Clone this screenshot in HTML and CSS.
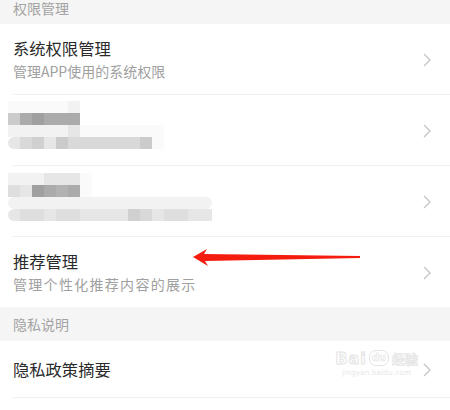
FILE: index.html
```html
<!DOCTYPE html>
<html lang="zh">
<head>
<meta charset="utf-8">
<link rel="stylesheet" href="styles.css">
</head>
<body>
<div class="page">
  <div class="section top">权限管理</div>
  <div class="row">
    <div class="text">
      <div class="title">系统权限管理</div>
      <div class="sub">管理APP使用的系统权限</div>
    </div>
    <svg class="chev" viewBox="0 0 8 14" width="8" height="14"><polyline points="1,1 7,7 1,13"/></svg>
  </div>
  <div class="row">
    <div class="mosaic m-a">
      <span class="c0"></span><span class="c0"></span><span class="c0"></span><span class="c0"></span><span class="c0"></span><span class="c1"></span><span></span><span></span><span></span><span></span><span></span><span></span><span></span>
      <span class="c4"></span><span class="c5"></span><span class="c6"></span><span class="c5"></span><span class="c5"></span><span class="c5"></span><span></span><span></span><span></span><span></span><span></span><span></span><span></span>
      <span class="c1"></span><span class="c1"></span><span class="c1"></span><span class="c1"></span><span class="c1"></span><span class="c2"></span><span class="c0"></span><span class="c0"></span><span class="c0"></span><span class="c0"></span><span class="c0"></span><span class="c0"></span><span class="c0"></span>
      <span class="c2 rl"></span><span class="c3"></span><span class="c3b"></span><span class="c2"></span><span class="c4"></span><span class="c3"></span><span class="c3"></span><span class="c3"></span><span class="c3"></span><span class="c3"></span><span class="c3"></span><span class="c4"></span><span class="c0"></span>
    </div>
    <svg class="chev" viewBox="0 0 8 14" width="8" height="14"><polyline points="1,1 7,7 1,13"/></svg>
  </div>
  <div class="row">
    <div class="mosaic m-b">
      <span class="c1"></span><span class="c1"></span><span class="c1"></span><span class="c2"></span><span class="c2"></span><span class="c2"></span><span class="c0"></span><span></span><span></span><span></span><span></span><span></span><span></span><span></span><span></span><span></span><span></span>
      <span class="c2b"></span><span class="c2"></span><span class="c6"></span><span class="c5"></span><span class="c5b"></span><span class="c5"></span><span class="c0"></span><span></span><span></span><span></span><span></span><span></span><span></span><span></span><span></span><span></span><span></span>
      <span class="c1 rl"></span><span class="c1"></span><span class="c1"></span><span class="c1"></span><span class="c1"></span><span class="c1"></span><span class="c1"></span><span class="c1"></span><span class="c1"></span><span class="c1"></span><span class="c1"></span><span class="c1"></span><span class="c1"></span><span class="c1"></span><span class="c1"></span><span class="c1"></span><span class="c1 rr"></span>
      <span class="c2 rl"></span><span class="c2b"></span><span class="c2b"></span><span class="c2"></span><span class="c2b"></span><span class="c2b"></span><span class="c2"></span><span class="c2"></span><span class="c2"></span><span class="c2"></span><span class="c3b"></span><span class="c3"></span><span class="c2"></span><span class="c2b"></span><span class="c2b"></span><span class="c2"></span><span class="c2"></span>
    </div>
    <svg class="chev" viewBox="0 0 8 14" width="8" height="14"><polyline points="1,1 7,7 1,13"/></svg>
  </div>
  <div class="row last">
    <div class="text">
      <div class="title">推荐管理</div>
      <div class="sub wide">管理个性化推荐内容的展示</div>
    </div>
    <svg class="chev" viewBox="0 0 8 14" width="8" height="14"><polyline points="1,1 7,7 1,13"/></svg>
  </div>
  <div class="section">隐私说明</div>
  <div class="row single">
    <div class="text">
      <div class="title">隐私政策摘要</div>
    </div>
    <svg class="chev" viewBox="0 0 8 14" width="8" height="14"><polyline points="1,1 7,7 1,13"/></svg>
    <div class="watermark">
      <div class="wm-top"><span class="wm-bai">Bai</span><span class="wm-du">du</span><span class="wm-jy">经验</span></div>
      <div class="wm-url">jingyan.baidu.com</div>
    </div>
  </div>
</div>
<svg class="arrow" width="180" height="24" viewBox="190 246 180 24">
  <polygon points="193,257 207,249 204,254 360,256 360,258 205,261 208,266" />
</svg>
</body>
</html>
```
FILE: styles.css
```css
html, body {
  margin: 0;
  padding: 0;
  background: #ffffff;
  font-family: "Noto Sans CJK SC", "Noto Sans", sans-serif;
  overflow: hidden;
}
.page {
  position: relative;
}
.section {
  height: 34px;
  line-height: 34px;
  background: #f5f5f5;
  color: #a3a3a3;
  font-size: 14px;
  padding-left: 13px;
}
.section.top {
  height: 24px;
  line-height: 16px;
}
.row {
  height: 70px;
  margin-left: 13px;
  border-bottom: 1px solid #f1f1f1;
  display: flex;
  align-items: center;
  justify-content: space-between;
  padding-right: 19px;
  position: relative;
}
.row.last {
  border-bottom: none;
}
.row.single {
  height: 56px;
}
.text {
  display: flex;
  flex-direction: column;
}
.title {
  font-size: 16.3px;
  line-height: 24px;
  color: #2a2a2a;
}
.sub {
  font-size: 14px;
  line-height: 22px;
  color: #a0a0a0;
}
.sub.wide {
  letter-spacing: 1.3px;
}
.chev {
  flex: none;
  margin-top: 1px;
}
.chev polyline {
  fill: none;
  stroke: #c6c6c6;
  stroke-width: 1.4;
}
.mosaic {
  display: grid;
  grid-auto-rows: 12px;
  margin-left: -5px;
  align-self: flex-start;
}
.m-a {
  grid-template-columns: repeat(13, 12px);
  margin-top: 6px;
}
.m-b {
  grid-template-columns: repeat(17, 12px);
  margin-top: 7px;
}
.mosaic span { display: block; }
.c0 { background: #fafafa; }
.c1 { background: #f2f2f2; }
.c2 { background: #e6e6e6; }
.c2b { background: #dedede; }
.c3 { background: #d9d9d9; }
.c3b { background: #d0d0d0; }
.c4 { background: #cbcbcb; }
.c5 { background: #ababab; }
.c5b { background: #b2b2b2; }
.c6 { background: #a0a0a0; }
.rl { border-radius: 6px 0 0 6px; }
.rr { border-radius: 0 6px 6px 0; }
.arrow {
  position: absolute;
  left: 190px;
  top: 246px;
}
.arrow polygon {
  fill: #f41c0f;
}
.watermark {
  position: absolute;
  right: 32px;
  top: 9px;
  display: flex;
  flex-direction: column;
  align-items: center;
  pointer-events: none;
}
.wm-top {
  display: flex;
  align-items: flex-end;
  font-family: "DejaVu Sans", sans-serif;
  font-weight: bold;
  font-size: 16px;
  line-height: 18px;
}
.wm-bai {
  color: #ffffff;
  -webkit-text-stroke: 1px #e4e4e4;
  letter-spacing: 1px;
}
.wm-du {
  font-size: 10px;
  line-height: 14px;
  color: #ffffff;
  border: 1px solid #e4e4e4;
  border-radius: 7px;
  padding: 0 2px;
  margin: 0 3px 2px 2px;
  -webkit-text-stroke: 0.6px #e4e4e4;
}
.wm-jy {
  font-family: "Noto Sans CJK SC", sans-serif;
  font-size: 13px;
  color: #ffffff;
  -webkit-text-stroke: 0.8px #e4e4e4;
}
.wm-url {
  font-family: "DejaVu Sans", sans-serif;
  font-size: 7.5px;
  line-height: 10px;
  color: #e8e8e8;
}
```
